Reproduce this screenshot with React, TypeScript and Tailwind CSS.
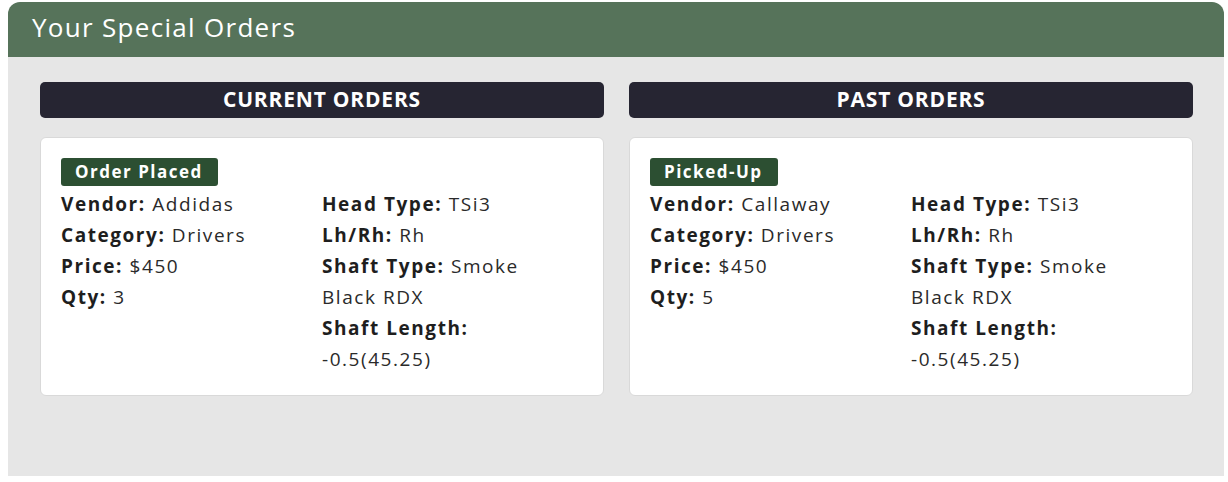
import React from "react";

type Row = { label: string; value: string };
type Order = { status: string; left: Row[]; right: Row[] };

const current: Order = {
  status: "Order Placed",
  left: [
    { label: "Vendor:", value: "Addidas" },
    { label: "Category:", value: "Drivers" },
    { label: "Price:", value: "$450" },
    { label: "Qty:", value: "3" },
  ],
  right: [
    { label: "Head Type:", value: "TSi3" },
    { label: "Lh/Rh:", value: "Rh" },
    { label: "Shaft Type:", value: "Smoke Black RDX" },
    { label: "Shaft Length:", value: "-0.5(45.25)" },
  ],
};

const past: Order = {
  status: "Picked-Up",
  left: [
    { label: "Vendor:", value: "Callaway" },
    { label: "Category:", value: "Drivers" },
    { label: "Price:", value: "$450" },
    { label: "Qty:", value: "5" },
  ],
  right: [
    { label: "Head Type:", value: "TSi3" },
    { label: "Lh/Rh:", value: "Rh" },
    { label: "Shaft Type:", value: "Smoke Black RDX" },
    { label: "Shaft Length:", value: "-0.5(45.25)" },
  ],
};

function Lines({ rows }: { rows: Row[] }) {
  return (
    <div className="flex flex-col">
      {rows.map((r) => (
        <div key={r.label} className="leading-[31px]">
          <span className="font-bold text-[#1e1e1e]">{r.label}</span>{" "}
          <span className="text-[#2a2a2a]">{r.value}</span>
        </div>
      ))}
    </div>
  );
}

function Column({ title, order }: { title: string; order: Order }) {
  return (
    <div className="flex flex-col">
      <div className="h-[36px] rounded-[5px] bg-[#262532] flex items-center justify-center text-white font-bold text-[21px] tracking-[0.8px]">
        {title}
      </div>
      <div className="mt-[19px] bg-white border border-[#d9d9d9] rounded-[6px] px-[20px] pt-[20px] pb-[20px]">
        <div className="inline-flex h-[28px] items-center rounded-[3px] bg-[#2c4f32] pl-[14px] pr-[15px] text-white font-bold text-[17px] tracking-[1.5px]">
          {order.status}
        </div>
        <div className="mt-[3px] grid grid-cols-[261px_1fr] text-[19px] tracking-[1.55px]">
          <Lines rows={order.left} />
          <div className="pr-[14px]">
            <Lines rows={order.right} />
          </div>
        </div>
      </div>
    </div>
  );
}

export default function App() {
  return (
    <div
      className="bg-white h-[482px] pl-[8px] pr-[4px] pt-[2px]"
      style={{ fontFamily: "'Open Sans', Lato, sans-serif" }}
    >
      <div className="rounded-t-[12px] overflow-hidden">
        <div className="h-[55px] bg-[#56735a] flex items-center px-[24px] pb-[4px] text-white text-[26px] tracking-[1.3px]">
          Your Special Orders
        </div>
        <div className="h-[419px] bg-[#e6e6e6] pl-[32px] pr-[31px] pt-[25px] grid grid-cols-2 gap-x-[25px] items-start">
          <Column title="CURRENT ORDERS" order={current} />
          <Column title="PAST ORDERS" order={past} />
        </div>
      </div>
    </div>
  );
}
